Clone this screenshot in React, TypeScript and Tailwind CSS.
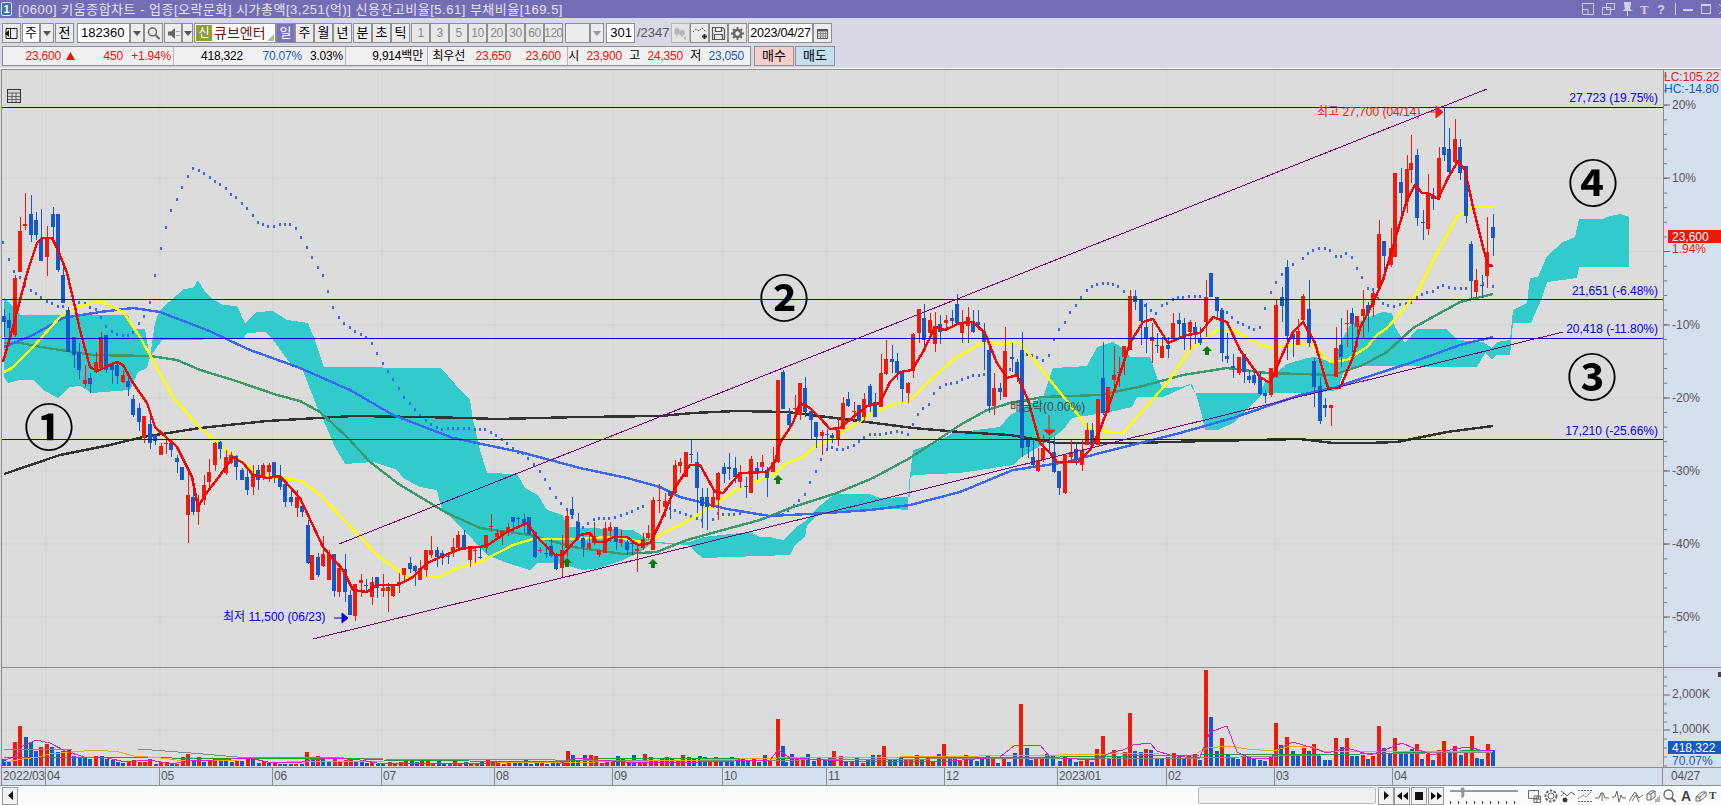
import type { ReactNode } from "react"

type Row = [number, number, number, number, number, number]

// candle rows read off the chart: [x, up?, wickTop, bodyTop, bodyBottom, wickBottom]
const scaled = (ox: number, oy: number, rows: Row[]): Row[] =>
  rows.map(([x, c, a, b, d, e]) => [ox + x / 3, c, oy + a / 3, oy + b / 3, oy + d / 3, oy + e / 3])

const candles: Row[] = [
  ...scaled(0, 180, [
    [12, 0, 388, 408, 425, 470], [28, 0, 400, 420, 445, 470], [44, 1, 285, 295, 465, 470], [61, 1, 110, 152, 275, 275],
    [76, 1, 40, 133, 137, 150], [94, 0, 45, 102, 165, 185], [109, 0, 95, 120, 165, 180], [124, 0, 88, 178, 243, 243],
    [142, 1, 138, 170, 232, 288], [158, 0, 82, 102, 140, 185], [175, 0, 102, 102, 270, 275], [190, 0, 255, 285, 370, 370],
    [205, 0, 380, 390, 515, 515], [222, 0, 472, 472, 525, 565], [238, 0, 490, 517, 570, 598], [256, 1, 555, 600, 612, 620],
    [271, 0, 578, 595, 612, 640], [288, 1, 515, 545, 575, 580], [304, 1, 455, 472, 565, 570], [319, 0, 465, 465, 570, 578],
    [337, 0, 545, 555, 570, 612], [352, 0, 545, 555, 588, 612], [370, 1, 570, 585, 605, 610], [385, 0, 590, 603, 620, 648],
    [400, 0, 645, 657, 705, 710], [417, 0, 670, 684, 725, 752], [433, 1, 708, 708, 775, 790], [451, 0, 700, 732, 790, 806],
    [466, 0, 765, 765, 782, 795], [484, 1, 790, 798, 825, 825], [499, 1, 770, 788, 792, 822], [514, 0, 788, 790, 810, 832],
    [532, 0, 825, 835, 845, 880], [547, 0, 860, 862, 900, 900],
    [646, 1, 785, 790, 855, 872], [661, 0, 783, 785, 808, 838], [678, 1, 810, 832, 880, 885], [693, 1, 815, 825, 850, 852],
    [709, 0, 825, 828, 862, 900], [727, 0, 865, 870, 900, 900],
  ]),
  [188, 1, 470, 495, 515, 543], [193, 0, 490, 497, 512, 515], [198, 1, 495, 505, 512, 525], [204, 1, 475, 485, 500, 505],
  [209, 1, 459, 472, 482, 490], [247, 0, 470, 477, 490, 495], [253, 1, 465, 475, 487, 495], [258, 0, 465, 470, 480, 490],
  [263, 1, 463, 465, 478, 480], [269, 1, 463, 465, 472, 482], [274, 0, 462, 462, 478, 483], [280, 0, 465, 477, 487, 490],
  ...scaled(280, 400, [
    [15, 0, 240, 252, 305, 320], [32, 0, 265, 292, 305, 318], [50, 1, 270, 290, 325, 350], [65, 0, 305, 318, 335, 350],
    [83, 0, 360, 375, 490, 492], [97, 1, 465, 465, 540, 540], [115, 0, 460, 470, 525, 530], [130, 1, 408, 462, 498, 500],
    [146, 1, 450, 462, 540, 540], [163, 0, 462, 462, 572, 590], [178, 1, 490, 505, 575, 590], [196, 0, 462, 507, 575, 605],
    [211, 0, 570, 585, 645, 645], [226, 1, 552, 552, 648, 662], [244, 1, 522, 540, 550, 590], [259, 0, 538, 554, 556, 578],
    [277, 1, 530, 545, 590, 615], [292, 0, 530, 532, 565, 593], [310, 1, 522, 565, 572, 590], [325, 1, 550, 560, 572, 635],
    [340, 1, 552, 552, 587, 590], [358, 1, 518, 545, 555, 580], [373, 1, 505, 505, 525, 545], [391, 0, 472, 490, 507, 520],
    [406, 0, 495, 497, 512, 557], [421, 1, 480, 505, 540, 540], [439, 1, 450, 450, 510, 530], [454, 1, 408, 450, 465, 475],
    [472, 0, 440, 450, 470, 500], [487, 0, 450, 458, 475, 495], [505, 0, 462, 469, 471, 492], [520, 1, 415, 442, 455, 470],
    [535, 1, 392, 405, 445, 450], [553, 0, 390, 405, 450, 450], [569, 1, 445, 447, 480, 500], [585, 1, 440, 449, 452, 488],
    [601, 0, 440, 471, 473, 478], [617, 1, 405, 405, 445, 460], [633, 1, 342, 377, 379, 395], [650, 1, 390, 398, 410, 420],
    [667, 1, 390, 392, 405, 435], [683, 1, 370, 380, 395, 408], [700, 0, 350, 350, 365, 395], [715, 0, 352, 354, 356, 375],
    [732, 0, 342, 358, 372, 400], [748, 0, 352, 352, 402, 405], [764, 0, 395, 395, 470, 475], [781, 1, 440, 449, 451, 458],
    [797, 0, 430, 459, 461, 475], [812, 0, 418, 438, 467, 470], [829, 0, 460, 465, 507, 510], [845, 1, 405, 450, 505, 535],
    [862, 1, 330, 348, 445, 470], [877, 0, 292, 327, 345, 355], [893, 0, 340, 365, 415, 420], [910, 0, 410, 415, 442, 472],
    [926, 1, 400, 428, 445, 450], [943, 1, 365, 408, 430, 435], [958, 1, 450, 450, 465, 472], [976, 1, 365, 385, 458, 460],
    [991, 1, 365, 380, 392, 425], [1007, 0, 380, 380, 425, 450], [1024, 1, 390, 418, 430, 440], [1040, 0, 420, 425, 450, 465],
    [1057, 0, 420, 429, 431, 465], [1072, 1, 430, 447, 452, 515], [1088, 1, 400, 418, 445, 450], [1105, 1, 375, 400, 415, 420],
    [1120, 1, 292, 300, 450, 450], [1138, 1, 253, 299, 301, 340],
  ]),
  ...scaled(660, 280, [
    [14, 1, 640, 663, 680, 710], [30, 0, 632, 632, 648, 718], [46, 1, 540, 555, 640, 640], [61, 1, 535, 547, 558, 580],
    [78, 1, 515, 515, 590, 590], [93, 0, 478, 522, 524, 550], [111, 0, 515, 546, 625, 700], [127, 0, 625, 652, 677, 745],
    [142, 0, 625, 650, 680, 750], [158, 1, 625, 650, 682, 685], [175, 1, 575, 580, 660, 720], [192, 0, 550, 562, 582, 610],
    [208, 0, 520, 562, 566, 600], [226, 0, 530, 565, 590, 610], [241, 1, 555, 575, 605, 625], [257, 0, 590, 619, 621, 655],
    [274, 1, 528, 538, 638, 640], [290, 0, 545, 565, 575, 600], [306, 1, 525, 547, 560, 578], [322, 0, 560, 570, 595, 650],
    [338, 1, 500, 545, 575, 575], [355, 1, 300, 300, 545, 550], [370, 0, 270, 275, 388, 388], [388, 0, 385, 402, 435, 450],
    [404, 1, 345, 384, 386, 395], [421, 1, 310, 310, 405, 420], [436, 0, 292, 325, 395, 410], [452, 0, 385, 392, 420, 478],
    [469, 0, 425, 425, 470, 505], [485, 1, 450, 455, 467, 525], [501, 0, 448, 461, 463, 510], [517, 0, 460, 465, 475, 490],
    [533, 1, 410, 450, 480, 498], [550, 1, 350, 370, 448, 450], [565, 0, 335, 358, 378, 380], [582, 1, 365, 394, 396, 422],
    [598, 0, 375, 375, 422, 425], [613, 1, 340, 357, 410, 430], [631, 0, 312, 317, 378, 395], [646, 0, 340, 367, 410, 410],
    [664, 1, 222, 280, 380, 380], [679, 1, 180, 237, 282, 285], [695, 0, 195, 238, 245, 280], [712, 0, 218, 242, 280, 300],
    [727, 0, 270, 275, 328, 365], [744, 1, 305, 308, 340, 370], [760, 1, 160, 162, 272, 295], [778, 1, 88, 88, 160, 190],
    [793, 0, 72, 113, 180, 200], [810, 1, 100, 120, 160, 165], [826, 1, 95, 138, 192, 215], [841, 0, 105, 132, 155, 192],
    [859, 1, 105, 120, 128, 150], [875, 0, 90, 115, 122, 135], [892, 0, 42, 72, 130, 130], [907, 1, 90, 125, 158, 190],
    [923, 1, 82, 110, 138, 190], [940, 0, 90, 122, 155, 160], [955, 0, 90, 125, 135, 150], [971, 0, 130, 152, 185, 270],
    [988, 0, 205, 210, 378, 400], [1003, 1, 280, 325, 378, 405], [1020, 0, 310, 325, 335, 360],
  ]),
  ...scaled(1000, 280, [
    [16, 1, 140, 212, 350, 350], [35, 0, 190, 230, 238, 275], [50, 0, 238, 245, 285, 305], [67, 0, 155, 210, 505, 530],
    [83, 0, 470, 478, 500, 535], [98, 0, 480, 530, 555, 560], [115, 1, 505, 540, 572, 575], [130, 1, 465, 505, 540, 545],
    [147, 0, 470, 483, 486, 515], [163, 0, 470, 517, 575, 580], [178, 0, 573, 573, 625, 645], [196, 1, 525, 525, 640, 643],
    [212, 1, 480, 515, 530, 545], [229, 0, 490, 507, 540, 555], [245, 1, 480, 510, 555, 572], [262, 1, 430, 450, 495, 495],
    [277, 0, 430, 450, 495, 495], [293, 1, 358, 358, 495, 495], [310, 0, 185, 293, 400, 405], [325, 1, 320, 320, 395, 400],
    [342, 1, 197, 285, 300, 327], [358, 1, 230, 277, 279, 320], [373, 1, 197, 197, 230, 285], [390, 1, 30, 47, 210, 210],
    [406, 0, 30, 48, 65, 90], [423, 0, 57, 57, 122, 195], [439, 0, 70, 140, 178, 218], [455, 1, 130, 172, 182, 248],
    [472, 0, 160, 194, 196, 220], [487, 1, 170, 197, 233, 233], [504, 0, 170, 195, 208, 235], [520, 1, 100, 128, 175, 178],
    [537, 0, 100, 120, 133, 170], [553, 0, 115, 130, 178, 210], [569, 1, 120, 125, 155, 210], [585, 0, 125, 142, 158, 192],
    [601, 0, 140, 175, 190, 195], [619, 1, 0, 50, 125, 170], [634, 0, -20, -20, 50, 50], [650, 0, 50, 50, 93, 110],
    [667, 0, 90, 90, 220, 245], [682, 0, 160, 228, 237, 250], [700, 0, 222, 258, 265, 295], [716, 1, 232, 232, 280, 285],
    [733, 0, 222, 222, 275, 310], [748, 0, 270, 287, 300, 310], [763, 0, 270, 285, 310, 315], [781, 0, 272, 290, 343, 345],
    [796, 0, 330, 338, 348, 368], [814, 1, 265, 265, 345, 350], [829, 1, 60, 75, 290, 295], [845, 0, 20, 50, 78, 125],
    [861, 0, -60, -40, 168, 240], [878, 0, 150, 162, 178, 232], [895, 1, 118, 152, 195, 195], [910, 1, 42, 48, 120, 125],
    [928, 0, 0, 88, 190, 200], [943, 0, 235, 243, 322, 380], [959, 0, 290, 318, 422, 432], [976, 0, 355, 375, 383, 412],
    [992, 1, 375, 375, 385, 438], [1008, 1, 140, 205, 290, 292], [1023, 0, 115, 195, 232, 260], [1040, 1, 90, 129, 131, 200],
    [1057, 0, 85, 100, 132, 215], [1072, 1, 108, 108, 142, 200], [1089, 1, 30, 88, 108, 175], [1104, 0, 65, 75, 100, 155],
    [1120, 1, 30, 40, 75, 110],
  ]),
  ...scaled(1340, 110, [
    [118, 1, 330, 372, 535, 540], [133, 0, 392, 392, 437, 510], [152, 1, 355, 415, 465, 470], [166, 1, 190, 190, 440, 440],
    [184, 0, 175, 215, 248, 330], [200, 1, 135, 178, 275, 310], [214, 1, 75, 160, 180, 218], [232, 0, 118, 135, 325, 348],
    [248, 0, 300, 337, 339, 390], [265, 1, 192, 250, 356, 375], [280, 0, 235, 255, 268, 300], [296, 1, 110, 145, 265, 270],
    [313, 0, -9, 112, 135, 152], [328, 0, 55, 118, 185, 205], [346, 1, 27, 88, 155, 170], [361, 0, 88, 112, 190, 210],
    [379, 0, 168, 168, 318, 338], [394, 0, 393, 403, 512, 565], [409, 1, 478, 510, 545, 562], [426, 0, 495, 524, 526, 565],
    [442, 1, 322, 425, 498, 535], [460, 0, 312, 352, 383, 437],
  ]),
]

// volume: [x, up?, height]
const volumeRows: [number, number, number][] = [
  [4, 0, 7], [9, 0, 4], [15, 1, 24], [20, 1, 40], [26, 0, 29], [31, 0, 24], [36, 0, 15], [41, 1, 19], [47, 1, 22], [52, 0, 19], [58, 0, 14],
  [63, 1, 15], [69, 1, 16], [74, 0, 10], [80, 0, 9], [85, 0, 9], [90, 0, 7], [96, 1, 10], [102, 0, 10], [107, 0, 7], [113, 0, 6],
  [118, 0, 4], [123, 0, 3], [129, 1, 5], [134, 1, 6], [140, 1, 4], [145, 1, 4], [150, 1, 7], [156, 0, 2], [161, 1, 4], [167, 1, 4],
  [172, 0, 3], [177, 1, 2], [183, 1, 9], [188, 1, 12], [194, 0, 5], [199, 1, 9], [204, 0, 4], [210, 1, 6], [215, 1, 8], [221, 0, 5],
  [226, 0, 5], [232, 0, 4], [237, 1, 5], [242, 0, 5], [248, 1, 9], [253, 0, 8], [259, 0, 3], [264, 1, 5], [269, 0, 3], [275, 1, 3],
  [280, 0, 2], [285, 0, 2], [291, 0, 2], [296, 1, 2], [302, 0, 2], [307, 1, 14], [313, 0, 8], [318, 1, 10], [323, 0, 8], [329, 0, 5],
  [335, 1, 8], [340, 1, 5], [346, 1, 6], [351, 1, 7], [356, 0, 5], [362, 0, 5], [367, 0, 3], [372, 1, 4], [378, 0, 2], [383, 0, 2],
  [568, 1, 15], [573, 0, 11], [578, 0, 6], [778, 1, 47], [783, 0, 20], [834, 1, 15], [884, 1, 20], [944, 1, 22], [1021, 1, 62], [1027, 0, 18],
  [1060, 0, 5], [1065, 1, 10], [1070, 0, 7], [1076, 0, 4], [1081, 1, 5], [1087, 1, 7], [1092, 0, 4], [1097, 1, 17], [1103, 1, 30], [1109, 0, 7],
  [1114, 1, 16], [1119, 0, 10], [1125, 1, 14], [1130, 1, 53], [1135, 0, 15], [1141, 0, 14], [1146, 1, 17], [1151, 0, 16], [1157, 0, 8],
  [1162, 0, 7], [1168, 1, 9], [1174, 1, 13], [1179, 0, 9], [1184, 0, 7], [1189, 1, 11], [1195, 1, 12], [1200, 0, 6], [1206, 1, 96], [1211, 0, 49],
  [1217, 0, 15], [1222, 1, 28], [1228, 0, 12], [1233, 0, 8], [1238, 0, 7], [1244, 1, 10], [1249, 0, 9], [1254, 0, 7], [1260, 0, 6], [1265, 0, 5],
  [1271, 1, 10], [1276, 1, 43], [1281, 0, 21], [1287, 1, 29], [1293, 0, 15], [1298, 0, 11], [1304, 1, 18], [1309, 0, 15], [1314, 1, 22],
  [1319, 0, 10], [1325, 0, 6], [1330, 0, 6], [1336, 1, 28], [1342, 0, 19], [1347, 1, 28], [1352, 0, 10], [1357, 0, 10], [1363, 1, 11],
  [1368, 0, 7], [1373, 1, 10], [1379, 1, 40], [1384, 0, 18], [1390, 0, 12], [1395, 1, 28], [1401, 0, 15], [1406, 0, 15], [1412, 0, 17],
  [1417, 1, 22], [1422, 0, 7], [1428, 1, 12], [1433, 0, 6], [1439, 1, 16], [1444, 1, 25], [1450, 0, 15], [1455, 1, 20], [1461, 0, 11],
  [1466, 1, 16], [1472, 1, 30], [1477, 0, 8], [1482, 0, 7], [1488, 1, 22], [1493, 0, 16],
]

const volumes = (() => {
  let seed = 7
  const next = () => {
    seed = (seed * 1103515245 + 12345) % 2147483648
    return seed / 2147483648
  }
  const out: [number, number, number][] = []
  for (let i = 0; i < 275; i++) {
    const x = 4 + i * 5.434
    const known = volumeRows.find((v) => Math.abs(v[0] - x) < 2.7)
    if (known) {
      out.push(known)
      continue
    }
    const near = candles.reduce((a, c) => (Math.abs(c[0] - x) < Math.abs(a[0] - x) ? c : a), candles[0])
    out.push([x, near[1], x < 578 ? 2 + next() * 4 : 3 + next() * 10])
  }
  return out
})()

const redLine =
  "3,362 13,327 20,300 28,270 37,243 42,238 52,238 58,250 67,273 75,307 80,330 90,367 97,371 110,365 117,362 123,365 133,383 147,403 155,427 167,438 177,447 192,477 198,507 205,495 218,478 233,457 243,463 253,475 267,478 280,476 300,498 323,547 343,570 353,590 367,592 377,585 398,585 413,577 427,563 450,553 463,548 480,547 488,545 507,532 527,523 537,537 555,555 563,555 580,535 590,533 597,542 605,542 613,537 627,537 638,545 650,543 660,523 675,488 690,465 700,465 715,492 723,493 740,473 767,472 775,462 780,443 793,423 800,403 810,408 820,418 830,429 840,428 853,417 867,406 880,403 890,382 900,372 912,370 923,352 935,327 945,330 960,323 973,322 985,333 997,363 1007,378 1017,375 1028,400 1040,443 1050,453 1057,462 1078,462 1090,450 1100,430 1117,383 1130,343 1143,322 1153,319 1168,343 1187,335 1200,333 1213,317 1227,322 1240,350 1260,377 1270,383 1283,353 1293,332 1303,322 1315,343 1328,388 1340,388 1353,357 1360,328 1373,303 1383,280 1397,233 1407,200 1415,185 1422,193 1428,193 1438,199 1448,178 1458,161 1465,170 1473,207 1483,247 1488,265 1493,266"
const yellowLine =
  "4,372 12,368 33,347 60,317 77,307 100,301 123,312 140,337 173,397 200,428 230,453 257,473 280,479 300,480 320,495 347,523 377,555 407,577 440,577 457,568 480,562 513,545 533,539 573,539 613,537 647,543 663,533 680,525 703,512 740,488 773,475 787,463 803,457 813,448 833,438 873,413 897,403 908,402 927,383 953,360 983,342 1000,344 1020,343 1050,380 1090,430 1123,433 1167,383 1190,350 1217,330 1233,330 1260,345 1273,348 1293,345 1310,343 1330,362 1347,360 1367,347 1377,335 1387,328 1397,317 1417,293 1437,253 1457,217 1473,207 1493,207"
const greenLine =
  "4,343 20,343 47,348 93,355 150,356 177,360 200,370 233,380 277,395 300,401 320,412 347,437 370,462 400,485 447,513 480,528 530,535 573,547 623,554 657,552 687,540 723,530 760,520 793,507 837,493 873,478 910,458 933,443 960,425 987,410 1010,403 1043,397 1100,395 1143,386 1183,375 1227,368 1267,373 1333,375 1363,365 1387,352 1413,328 1460,302 1493,294"
const blueLine =
  "4,347 33,335 63,318 100,312 133,308 160,312 207,330 250,350 300,368 350,390 393,415 453,438 520,452 580,468 627,478 660,487 680,497 727,509 770,516 827,513 870,510 910,505 960,492 1013,470 1067,462 1100,453 1140,443 1180,433 1233,418 1300,395 1333,388 1410,363 1460,345 1493,337"
const blackLine =
  "4,474 60,455 110,445 143,437 200,428 267,421 353,416 420,417 467,418 497,419 580,417 660,416 693,413 737,411 787,412 827,417 867,422 913,428 960,432 1010,435 1057,443 1133,443 1207,441 1300,439 1333,443 1367,443 1397,442 1447,432 1493,426"

const cloud =
  "4,298 12,305 20,315 128,315 133,329 145,329 148,347 150,357 155,323 160,310 177,295 183,289 193,288 198,280 205,292 213,299 223,305 237,306 245,323 257,312 273,311 287,320 308,323 315,340 324,367 441,368 455,384 470,400 473,420 480,450 487,473 517,474 525,488 538,495 547,510 563,515 567,527 633,530 653,542 677,543 690,542 703,537 750,532 760,537 770,537 783,540 795,528 807,520 818,507 835,494 870,494 880,498 910,497 910,477 913,450 937,442 953,433 1000,427 1010,415 1043,397 1053,368 1087,366 1097,347 1113,342 1123,348 1130,357 1150,357 1158,380 1163,388 1182,387 1190,384 1195,393 1260,393 1265,382 1287,364 1307,358 1315,357 1333,363 1342,340 1350,325 1382,312 1392,313 1395,327 1405,343 1417,329 1447,329 1457,340 1483,342 1492,348 1497,342 1510,340 1513,310 1527,303 1530,278 1538,277 1547,256 1563,242 1575,237 1579,219 1603,219 1610,216 1620,214 1629,217 1629,267 1579,267 1577,278 1547,282 1542,298 1531,323 1513,323 1510,355 1497,355 1492,359 1485,353 1477,367 1363,366 1343,373 1338,390 1315,393 1263,393 1248,408 1233,423 1218,430 1205,430 1203,420 1197,397 1192,384 1183,388 1163,397 1137,397 1132,407 1110,412 1072,418 1063,430 1050,440 1022,457 1013,465 960,473 913,475 909,480 908,510 880,508 820,513 807,525 805,537 795,545 790,555 703,558 695,552 690,545 653,543 640,552 623,560 600,568 583,570 557,563 537,563 530,570 507,563 487,555 473,540 443,510 440,503 437,490 420,487 403,478 397,470 373,462 345,464 335,447 322,417 317,407 302,368 293,367 273,340 265,332 247,333 243,339 162,340 155,350 150,357 147,368 138,372 130,390 103,392 92,393 80,386 70,387 58,398 43,390 33,380 20,380 8,383 4,377"

const dots =
  "3,242 9,259 14,271 20,277 25,285 31,290 36,293 41,297 47,301 52,303 58,306 63,306 79,302 85,303 90,307 96,309 101,317 106,326 112,331 117,334 123,335 128,335 133,332 139,323 144,316 150,302 155,275 161,248 166,227 171,210 177,199 182,187 188,176 193,168 199,170 204,173 210,177 215,181 220,184 226,188 231,194 236,197 242,203 247,208 253,215 258,222 263,224 268,226 274,226 280,224 285,224 290,224 296,228 301,237 307,247 312,257 318,267 323,275 328,291 333,307 339,317 344,323 350,327 355,331 361,334 366,337 372,343 377,353 383,363 388,371 393,379 399,388 404,397 410,403 415,409 420,415 426,420 431,424 437,427 442,429 448,428 453,428 458,428 464,428 469,428 475,429 480,429 485,429 491,432 496,435 502,439 507,443 513,448 518,452 523,453 528,458 534,464 540,471 545,479 550,488 556,497 561,503 567,509 572,517 577,522 583,527 588,523 594,519 599,518 604,518 609,518 615,517 621,515 627,513 632,511 638,508 643,506 670,508 675,510 680,512 686,514 691,516 697,518 702,520 713,519 718,513 723,514 729,514 734,514 740,513 783,514 788,510 794,505 799,500 805,494 810,482 816,471 821,459 827,449 832,447 837,449 843,449 848,447 854,445 859,441 864,437 870,434 875,434 880,434 886,433 891,432 897,431 902,432 908,434 913,424 918,414 923,408 929,404 934,393 940,387 946,384 951,383 957,382 962,379 968,377 973,375 979,375 984,374 1010,369 1016,368 1027,354 1032,355 1037,357 1043,360 1049,355 1054,339 1059,329 1065,322 1070,312 1076,305 1081,297 1087,290 1092,286 1097,284 1103,283 1108,283 1113,284 1118,286 1124,291 1135,297 1145,305 1151,310 1156,313 1162,305 1167,303 1173,299 1178,297 1183,297 1189,296 1195,296 1200,296 1222,309 1227,312 1232,317 1238,322 1243,324 1249,327 1254,329 1260,327 1265,308 1271,292 1276,282 1282,274 1287,268 1293,264 1303,258 1308,253 1313,250 1319,248 1325,248 1330,250 1336,256 1341,256 1346,253 1352,257 1357,268 1362,277 1368,288 1373,289 1378,298 1383,303 1388,305 1394,306 1400,304 1406,303 1411,302 1417,297 1422,294 1427,292 1433,291 1438,287 1443,285 1449,287 1455,288 1461,288 1466,288 1483,283 1493,286"
    .split(" ")
    .map((p) => p.split(",").map(Number))

const volMagenta =
  "4,760 15,757 23,746 36,740 50,743 65,751 84,757 107,758 126,762 149,760 172,764 191,760 214,760 249,758 268,762 298,763 310,760 333,758 360,760 383,764 421,763 497,764 559,764 568,760 578,758 597,760 640,763 700,762 770,760 778,750 790,758 860,762 950,761 1000,757 1015,745 1040,745 1050,757 1060,758 1093,760 1113,752 1123,750 1133,745 1150,743 1157,751 1170,755 1193,758 1200,757 1210,732 1227,726 1237,752 1250,758 1270,759 1280,748 1293,742 1313,748 1327,753 1347,748 1370,755 1387,749 1402,743 1413,748 1433,755 1453,749 1470,747 1483,751 1493,750"
const volOrange =
  "4,762 38,757 50,754 73,752 96,750 119,752 134,756 161,758 176,760 237,761 287,761 325,761 383,762 497,762 547,763 597,762 700,760 778,758 900,757 1060,755 1110,754 1160,753 1197,753 1207,748 1230,746 1247,749 1273,751 1287,747 1310,746 1323,751 1360,751 1493,751"
const volGreen = "4,757 172,758 344,758 383,760 555,762 597,759 800,758 1000,757 1060,757 1200,755 1360,754 1493,750"
const volGray = "4,750 73,749 138,749 165,751 191,753 237,757 344,758 383,759 555,760 800,760 1060,758 1200,758 1360,754 1493,752"

const monthX = [46, 160, 273, 382, 495, 613, 723, 827, 945, 1058, 1167, 1275, 1393]
const percentY = [105, 178, 251.5, 325, 398, 471, 544, 617]

const lineClass = "fill-none [stroke-linejoin:round]"

function PriceChart() {
  return (
    <svg width={1661} height={597} viewBox="2 70 1661 597" className="block shrink-0">
      {percentY.map((y) => (
        <line key={y} x1={2} x2={1663} y1={y} y2={y} stroke="#d3d3d3" />
      ))}
      {monthX.map((x) => (
        <line key={x} x1={x} x2={x} y1={70} y2={667} stroke="#d3d3d3" />
      ))}
      <polygon points={cloud} fill="#32cbcc" shapeRendering="crispEdges" />
      <g shapeRendering="crispEdges">
        {dots.map(([x, y]) => (
          <rect key={`${x}-${y}`} x={x - 1} y={y - 1} width={2} height={3} fill="#3b67f5" />
        ))}
      </g>
      <g shapeRendering="crispEdges" strokeWidth={2.4}>
        <polyline points={blackLine} className={lineClass} stroke="#333333" />
        <polyline points={greenLine} className={lineClass} stroke="#3a9a6e" />
        <polyline points={blueLine} className={lineClass} stroke="#3b67f5" />
        <polyline points={yellowLine} className={lineClass} stroke="#ffff00" />
      </g>
      <g shapeRendering="crispEdges">
        {candles.map(([x, up, wt, bt, bb, wb]) => {
          const cx = Math.round(x)
          const color = up ? "#ee1a0a" : "#1558c8"
          return (
            <g key={`${x}-${wt}`} fill={color}>
              <rect x={cx} y={wt} width={1} height={wb - wt} />
              <rect x={cx - 2} y={bt} width={4} height={Math.max(bb - bt, 1)} />
            </g>
          )
        })}
      </g>
      <polyline points={redLine} className={lineClass} stroke="#ff0000" strokeWidth={2.4} shapeRendering="crispEdges" />

      {[107, 299, 338, 439].map((y) => (
        <line key={y} x1={2} x2={1663} y1={y + 0.5} y2={y + 0.5} stroke="#0000d0" />
      ))}
      <g stroke="#800080" shapeRendering="crispEdges">
        <line x1={339} y1={544} x2={1487} y2={89} />
        <line x1={313} y1={639} x2={1563} y2={332} />
      </g>

      <g className="text-[12px] fill-[#0000e0]" textAnchor="end">
        <text x={1658} y={102}>27,723 (19.75%)</text>
        <text x={1658} y={295}>21,651 (-6.48%)</text>
        <text x={1658} y={333}>20,418 (-11.80%)</text>
        <text x={1658} y={435}>17,210 (-25.66%)</text>
      </g>
      <text x={1317} y={116} className="text-[12px] fill-[#ee1a0a]">최고 27,700 (04/14)</text>
      <path d="M1428 112h8M1436 106l7 6-7 6z" stroke="#ee1a0a" fill="#ee1a0a" />
      <text x={223} y={621} className="text-[12px] fill-[#0000e0]">최저 11,500 (06/23)</text>
      <path d="M334 618h8M342 613l6 5-6 5z" stroke="#0000e0" fill="#0000e0" />
      <text x={1010} y={411} className="text-[12px] fill-[#444444]">배당락(0.00%)</text>
      <path d="M1049 415v14M1044 430h11l-5.500 5z" stroke="#ee1a0a" fill="#ee1a0a" />
      {[[567, 558], [653, 559], [778, 475], [1207, 346]].map(([x, y]) => (
        <path key={x} d={`M${x} ${y}l5 5h-3v4h-4v-4h-3z`} fill="#0a7a0a" />
      ))}
      <g className="text-[50px] font-bold fill-black" textAnchor="middle">
        <text x={49} y={446}>①</text>
        <text x={784} y={317}>②</text>
        <text x={1592} y={396}>③</text>
        <text x={1593} y={202}>④</text>
      </g>
      <rect x={7.5} y={89.5} width={13} height={13} fill="#d8d8d8" stroke="#333333" />
      <path d="M8 93h12M8 96.500h12M8 99.500h12M12 93v9M16 93v9" stroke="#666666" fill="none" />
    </svg>
  )
}

function PriceAxis() {
  const minor: number[] = []
  for (let y = 76; y < 660; y += 14.63) minor.push(y)
  return (
    <div className="w-[57px] shrink-0 border-l border-[#8c8c8c] bg-[#d5e0ee] box-content">
      <svg width={57} height={597} viewBox="1664 70 57 597" className="block">
        {minor.map((y) => (
          <line key={y} x1={1664} x2={1667} y1={y} y2={y} stroke="#777777" />
        ))}
        {percentY.map((y) => (
          <line key={y} x1={1664} x2={1670} y1={y} y2={y} stroke="#666666" />
        ))}
        <g className="text-[12px] fill-[#555555]">
          <text x={1672} y={109}>20%</text>
          <text x={1672} y={182}>10%</text>
          <text x={1672} y={329}>-10%</text>
          <text x={1672} y={402}>-20%</text>
          <text x={1672} y={475}>-30%</text>
          <text x={1672} y={548}>-40%</text>
          <text x={1672} y={621}>-50%</text>
        </g>
        <text x={1664} y={81} className="text-[12px] fill-[#ee1a0a]">LC:105.22</text>
        <text x={1664} y={93} className="text-[12px] fill-[#1558c8]">HC:-14.80</text>
        <rect x={1668} y={230} width={53} height={13} fill="#e8190a" />
        <text x={1672} y={241} className="text-[12px] fill-white">23,600</text>
        <text x={1672} y={253} className="text-[12px] fill-[#ee1a0a]">1.94%</text>
      </svg>
    </div>
  )
}

function VolumeChart() {
  return (
    <svg width={1661} height={99} viewBox="2 668 1661 99" className="block shrink-0">
      {[695, 730].map((y) => (
        <line key={y} x1={2} x2={1663} y1={y} y2={y} stroke="#d3d3d3" />
      ))}
      {monthX.map((x) => (
        <line key={x} x1={x} x2={x} y1={668} y2={767} stroke="#d3d3d3" />
      ))}
      <g shapeRendering="crispEdges">
        {volumes.map(([x, up, h]) => (
          <rect key={x} x={Math.round(x) - 2} y={766 - h} width={4} height={h} fill={up ? "#ee1a0a" : "#1558c8"} />
        ))}
        <polyline points={volGray} className={lineClass} stroke="#888888" strokeWidth={1} />
        <polyline points={volGreen} className={lineClass} stroke="#1f9a3c" strokeWidth={1} />
        <polyline points={volOrange} className={lineClass} stroke="#f5a800" strokeWidth={1} />
        <polyline points={volMagenta} className={lineClass} stroke="#e020c0" strokeWidth={1} />
      </g>
    </svg>
  )
}

function VolumeAxis() {
  return (
    <div className="w-[57px] shrink-0 border-l border-[#8c8c8c] bg-[#d5e0ee] box-content">
      <svg width={57} height={99} viewBox="1664 668 57 99" className="block">
        {[677, 686, 704, 713, 722, 739, 748, 757, 766].map((y) => (
          <line key={y} x1={1664} x2={1667} y1={y} y2={y} stroke="#777777" />
        ))}
        {[695, 730].map((y) => (
          <line key={y} x1={1664} x2={1670} y1={y} y2={y} stroke="#666666" />
        ))}
        <rect x={1718} y={672} width={3} height={5} fill="#444444" />
        <g className="text-[12px] fill-[#555555]">
          <text x={1672} y={698}>2,000K</text>
          <text x={1672} y={733}>1,000K</text>
        </g>
        <rect x={1668} y={741} width={53} height={13} fill="#1558c8" />
        <text x={1672} y={752} className="text-[12px] fill-white">418,322</text>
        <text x={1672} y={765} className="text-[12px] fill-[#1558c8]">70.07%</text>
      </svg>
    </div>
  )
}

const dateCells: [string, number][] = [
  ["2022/03", 44], ["04", 114], ["05", 113], ["06", 109], ["07", 113], ["08", 118], ["09", 110], ["10", 104],
  ["11", 118], ["12", 113], ["2023/01", 109], ["02", 108], ["03", 118], ["04", 270],
]

function Btn({
  w,
  className = "",
  children,
}: {
  w: string
  className?: string
  children?: ReactNode
}) {
  return (
    <div
      className={`${w} h-[20px] shrink-0 flex items-center justify-center border border-[#8f8f8f] text-[13px] ${className}`}
    >
      {children}
    </div>
  )
}

function Caret({ color = "#555555" }: { color?: string }) {
  return (
    <svg width={8} height={5} viewBox="0 0 8 5">
      <path d="M0 0h8L4 5z" fill={color} />
    </svg>
  )
}

function Glyph({ children, w = 15 }: { children: ReactNode; w?: number }) {
  return (
    <svg width={w} height={15} viewBox={`0 0 ${w} 15`} fill="none" stroke="#555555">
      {children}
    </svg>
  )
}

function TopToolbar() {
  const gray = "bg-[#ececec]"
  return (
    <div className="flex h-[28px] items-start pt-[5px] pl-[2px] text-black">
      <Btn w="w-[19px]" className={gray}>
        <Glyph>
          <path d="M2 2.500h11v10H2zM6.500 2.500v10" stroke="#222222" />
          <path d="M1 7.500l4-3.500v7z" fill="#111111" stroke="none" />
        </Glyph>
      </Btn>
      <Btn w="w-[18px] ml-px" className="bg-white">주</Btn>
      <Btn w="w-[14px]" className={gray}><Caret /></Btn>
      <Btn w="w-[19px] ml-px" className={gray}>전</Btn>
      <Btn w="w-[53px] ml-[3px] !justify-start pl-[3px]" className="bg-white">182360</Btn>
      <Btn w="w-[14px]" className={gray}><Caret /></Btn>
      <Btn w="w-[19px]" className={gray}>
        <Glyph>
          <circle cx="6.500" cy="6" r="4" strokeWidth="1.500" stroke="#666666" />
          <path d="M9.500 9l4 4" strokeWidth="2" stroke="#666666" />
        </Glyph>
      </Btn>
      <Btn w="w-[18px] ml-px" className={gray}>
        <Glyph>
          <path d="M2 5.500h3l4-3.500v11l-4-3.500H2z" fill="#666666" stroke="none" />
          <path d="M11 5v1M11 9v1M13 5v1M13 9v1" stroke="#666666" />
        </Glyph>
      </Btn>
      <Btn w="w-[11px]" className={gray}><Caret /></Btn>
      <div className="relative ml-px flex h-[20px] w-[82px] shrink-0 items-center border border-[#8f8f8f] bg-white pl-px">
        <span className="flex h-[16px] w-[16px] items-center justify-center bg-[#8fa038] text-[12px] text-white">신</span>
        <span className="ml-[2px] text-[14px] leading-none text-[#7a1010]">큐브엔터</span>
        <svg width={7} height={7} viewBox="0 0 7 7" className="absolute bottom-px right-px">
          <path d="M7 0v7H0z" fill="#b5b5b5" />
        </svg>
      </div>
      <Btn w="w-[19px]" className="bg-[#7a74b8] text-white">일</Btn>
      <Btn w="w-[19px]" className={gray}>주</Btn>
      <Btn w="w-[19px]" className={gray}>월</Btn>
      <Btn w="w-[19px]" className={gray}>년</Btn>
      <Btn w="w-[19px] ml-px" className={gray}>분</Btn>
      <Btn w="w-[19px]" className={gray}>초</Btn>
      <Btn w="w-[19px]" className={gray}>틱</Btn>
      <div className="ml-px flex shrink-0">
        {["1", "3", "5", "10", "20", "30", "60", "120"].map((n) => (
          <Btn key={n} w="w-[19px]" className="bg-[#e8e8e8] !text-[12px] tracking-[-0.5px] text-[#888888]">{n}</Btn>
        ))}
      </div>
      <Btn w="w-[25px] ml-[2px]" className="bg-[#ececec]" />
      <Btn w="w-[14px]" className="bg-[#ececec]"><Caret color="#999999" /></Btn>
      <Btn w="w-[29px] ml-[2px] !justify-end pr-[2px]" className="bg-white">301</Btn>
      <span className="ml-[2px] w-[33px] shrink-0 text-[13px] leading-[20px] text-[#555555]">/2347</span>
      <Btn w="w-[19px] ml-px !border-[#b5b5b5]" className="bg-[#e4e4e4]">
        <Glyph>
          <path d="M4 1v10M4 3h2v5H2V3zM9 3v8M7 5h4v4H7z" stroke="#b5b5b5" fill="#b5b5b5" />
          <path d="M10 12l3-2v4z" fill="#b5b5b5" stroke="none" />
        </Glyph>
      </Btn>
      <Btn w="w-[19px]" className={gray}>
        <Glyph>
          <path d="M1 6l3-3 3 2 3-3 4 4" stroke="#666666" strokeDasharray="2 1" />
          <path d="M10 10.500h5M12.500 8v5" stroke="#333333" strokeWidth="2" />
        </Glyph>
      </Btn>
      <Btn w="w-[19px]" className={gray}>
        <Glyph>
          <path d="M1.500 1.500h10l2 2v10h-12zM4.500 1.500v4h6v-4M3.500 8.500h8v5h-8z" strokeWidth="1.200" />
        </Glyph>
      </Btn>
      <Btn w="w-[19px]" className={gray}>
        <Glyph>
          <circle cx="7.500" cy="7.500" r="3.500" strokeWidth="2.500" stroke="#666666" />
          <path d="M7.500 1v2M7.500 12v2M1 7.500h2M12 7.500h2M3 3l1.500 1.500M10.500 10.500L12 12M12 3l-1.500 1.500M4.500 10.500L3 12" strokeWidth="1.800" stroke="#666666" />
        </Glyph>
      </Btn>
      <Btn w="w-[65px] ml-px" className="bg-white !text-[12.500px] tracking-[-0.2px]">2023/04/27</Btn>
      <Btn w="w-[19px]" className={gray}>
        <Glyph>
          <path d="M2.500 3.500h10v9h-10z" stroke="#555555" />
          <path d="M2 4.500h11" stroke="#555555" strokeWidth="2" />
          <path d="M2.500 7.500h10M2.500 10h10M5.500 6v6M8 6v6M10.500 6v6" stroke="#888888" />
        </Glyph>
      </Btn>
    </div>
  )
}

function Val({ w, color = "text-black", ml, children }: { w: string; color?: string; ml?: string; children: ReactNode }) {
  return <span className={`${w} ${color} ${ml ?? ""} shrink-0 text-right`}>{children}</span>
}

function QuoteRow() {
  const red = "text-[#f01208]"
  const blue = "text-[#1a5ad0]"
  return (
    <div className="flex h-[21px] pl-[2px] text-[12px] leading-[18px] tracking-[-0.2px]">
      <div className="flex h-[20px] w-[749px] shrink-0 border border-[#8f8f8f] bg-[#f0f0f0]">
        <div className="flex w-[171px] shrink-0 items-center border-r border-[#b5b5b5]">
          <Val w="w-[58px]" color={red}>23,600</Val>
          <svg width={9} height={8} viewBox="0 0 9 8" className="ml-[5px] shrink-0">
            <path d="M4.500 0L9 8H0z" fill="#f01208" />
          </svg>
          <Val w="w-[48px]" color={red}>450</Val>
          <Val w="w-[48px]" color={red}>+1.94%</Val>
        </div>
        <div className="flex w-[172px] shrink-0 items-center border-r border-[#b5b5b5]">
          <Val w="w-[69px]">418,322</Val>
          <Val w="w-[59px]" color={blue}>70.07%</Val>
          <Val w="w-[41px]">3.03%</Val>
        </div>
        <div className="flex w-[82px] shrink-0 items-center border-r border-[#b5b5b5]">
          <Val w="w-[77px]">9,914백만</Val>
        </div>
        <div className="flex w-[140px] shrink-0 items-center border-r border-[#b5b5b5]">
          <Val w="w-[37px]">최우선</Val>
          <Val w="w-[46px]" color={red}>23,650</Val>
          <Val w="w-[50px]" color={red}>23,600</Val>
        </div>
        <div className="flex flex-1 items-center">
          <Val w="w-[11px]">시</Val>
          <Val w="w-[43px]" color={red}>23,900</Val>
          <Val w="w-[18px]">고</Val>
          <Val w="w-[43px]" color={red}>24,350</Val>
          <Val w="w-[18px]">저</Val>
          <Val w="w-[43px]" color={blue}>23,050</Val>
        </div>
      </div>
      <div className="ml-[3px] flex h-[20px] w-[40px] items-center justify-center border border-[#8f8f8f] bg-[#f5d0cb] text-[13px] tracking-normal">매수</div>
      <div className="ml-px flex h-[20px] w-[40px] items-center justify-center border border-[#8f8f8f] bg-[#c5dff0] text-[13px] tracking-normal">매도</div>
    </div>
  )
}

function TitleBar() {
  return (
    <div className="flex h-[18px] items-center bg-[#736db5] text-[#e4e3f3]">
      <div className="ml-[1px] flex h-[14px] w-[11px] items-center justify-center rounded-[2px] border border-[#d8e4f4] bg-[#3a72b8] text-[11px] font-bold leading-none text-white">1</div>
      <span className="ml-[6px] text-[13px] leading-none tracking-[0.5px] whitespace-nowrap">
        [0600] 키움종합차트 - 업종[오락문화] 시가총액[3,251(억)] 신용잔고비율[5.61] 부채비율[169.5]
      </span>
      <div className="ml-auto flex items-center">
        <svg width={12} height={12} viewBox="0 0 12 12" fill="none" stroke="#cfcde8">
          <path d="M.500.500h11v11H.500zM.500 6.500h5.500v5" />
        </svg>
        <svg width={13} height={12} viewBox="0 0 13 12" fill="none" stroke="#cfcde8" className="ml-[8px]">
          <path d="M4.500.500h8v6h-8zM.500 4.500h8v7h-8z" />
        </svg>
        <svg width={11} height={14} viewBox="0 0 11 14" className="ml-[7px]">
          <path d="M2 0h7v2L8 7l3 2H0l3-2-1-5zM5 9h1v5H5z" fill="#cfcde8" />
        </svg>
        <span className="ml-[7px] w-[8px] font-['Liberation_Serif'] text-[13px] font-bold leading-none text-[#cfcde8]">T</span>
        <span className="ml-[9px] w-[8px] text-[13px] font-bold leading-none text-[#cfcde8]">?</span>
        <div className="ml-[10px] h-[12px] w-px bg-[#cfcde8]" />
        <div className="ml-[7px] mt-[1px] h-[2px] w-[10px] bg-[#cfcde8]" />
        <div className="ml-[8px] h-[10px] w-[10px] border border-t-2 border-[#cfcde8]" />
        <svg width={2} height={10} viewBox="0 0 2 10" className="ml-[8px]">
          <path d="M0 0l2 2M0 10l2-2" stroke="#cfcde8" />
        </svg>
      </div>
    </div>
  )
}

function MiniBtn({ ml = "", children }: { ml?: string; children: ReactNode }) {
  return (
    <div className={`flex h-[18px] w-[16px] shrink-0 items-center justify-center border border-[#9a9a9a] bg-[#f2f2f2] ${ml}`}>
      {children}
    </div>
  )
}

function BottomBar() {
  const s = "#666666"
  return (
    <div className="flex h-[20px] items-center border-t border-[#8c8c8c] bg-[#fbfbfb] pl-[2px]">
      <MiniBtn>
        <svg width={5} height={9} viewBox="0 0 5 9"><path d="M5 0v9L0 4.500z" fill="#111111" /></svg>
      </MiniBtn>
      <div className="w-[1180px] shrink-0" />
      <div className="h-[17px] w-[178px] shrink-0 rounded-[2px] border border-[#bbbbbb] bg-[#f0f0f0]" />
      <MiniBtn ml="ml-[2px]">
        <svg width={5} height={9} viewBox="0 0 5 9"><path d="M0 0v9l5-4.500z" fill="#111111" /></svg>
      </MiniBtn>
      <MiniBtn>
        <svg width={11} height={8} viewBox="0 0 11 8"><path d="M5 0v8L0 4zM11 0v8L6 4z" fill="#111111" /></svg>
      </MiniBtn>
      <MiniBtn ml="ml-px">
        <div className="h-[8px] w-[8px] bg-[#111111]" />
      </MiniBtn>
      <MiniBtn ml="ml-px">
        <svg width={11} height={8} viewBox="0 0 11 8"><path d="M0 0v8l5-4zM6 0v8l5-4z" fill="#111111" /></svg>
      </MiniBtn>
      <svg width={75} height={19} viewBox="0 0 75 19" className="ml-[4px] shrink-0">
        <rect x={2} y={4} width={68} height={2} fill="#9a9a9a" />
        <path d="M13 2h3v8l-2 2z" fill="#9a9a9a" stroke="#777777" strokeWidth={0.5} />
        {[2, 10, 18, 26, 34, 42, 50, 58, 66].map((x) => (
          <rect key={x} x={x} y={15} width={1} height={3} fill="#444444" />
        ))}
      </svg>
      <div className="ml-[4px] flex items-center gap-[3px] text-[#555555]">
        <svg width={14} height={14} viewBox="0 0 14 14" fill="none" stroke={s}>
          <path d="M1.500 1.500h10v8h-10zM7 7h6.500v6.500H7zM10 7v6.500M7 10h6.500" />
        </svg>
        <svg width={14} height={14} viewBox="0 0 14 14" fill="none" stroke={s}>
          <circle cx="7" cy="7" r="3" />
          <circle cx="7" cy="7" r="5.500" strokeDasharray="2.500 1.500" strokeWidth="2" />
        </svg>
        <svg width={14} height={14} viewBox="0 0 14 14" fill="none" stroke={s}>
          <path d="M0 7l3-3 3 3 4-4 4 3M0 2l3 2" />
          <circle cx="4" cy="11" r="2" fill="#333333" stroke="#333333" />
        </svg>
        <svg width={14} height={14} viewBox="0 0 14 14" fill="none" stroke={s} strokeDasharray="2 1">
          <path d="M0 1.500h14M0 12.500h14M0 10l5-4 3 2 6-6" />
        </svg>
        <svg width={14} height={14} viewBox="0 0 14 14" fill="none" stroke={s}>
          <path d="M0 9h4l2-5h2l2 5h4M7 4v8" />
        </svg>
        <svg width={14} height={14} viewBox="0 0 14 14" fill="none" stroke={s}>
          <path d="M0 8h3l2-6 2 11 2-7 2 3h3" />
        </svg>
        <svg width={14} height={14} viewBox="0 0 14 14" fill="none" stroke={s}>
          <path d="M0 12L6 3l4 6 4-3M3 12l4-6 3 7" />
        </svg>
        <svg width={14} height={14} viewBox="0 0 14 14" fill="none" stroke={s}>
          <path d="M1 5l4-3h4v6l-4 3H1zM1 5h4v6M5 5l4-3M10 13v-3M12 13V8M14 13V6" />
        </svg>
        <svg width={13} height={14} viewBox="0 0 13 14" fill="none" stroke={s}>
          <circle cx="5.500" cy="5.500" r="4.500" strokeWidth="1.300" />
          <path d="M8.500 9l4 4" strokeWidth="2" />
        </svg>
        <span className="ml-[2px] w-[11px] text-[14px] font-bold leading-none text-[#444444]">A</span>
        <svg width={12} height={14} viewBox="0 0 12 14" fill="none" stroke={s}>
          <path d="M1 8l6-5h4v4l-6 5H1zM1 8h4v4M5 8l6-5" />
        </svg>
        <span className="ml-[-1px] w-[7px] font-['Liberation_Serif'] text-[11px] font-bold leading-none text-[#444444]">T</span>
      </div>
    </div>
  )
}

export default function App() {
  return (
    <div className="flex h-[805px] w-[1721px] flex-col overflow-hidden bg-[#d8d8e6] [font-family:'Liberation_Sans','Noto_Sans_CJK_KR',sans-serif]">
      <TitleBar />
      <TopToolbar />
      <QuoteRow />
      <div className="h-px bg-[#d8d8e6]" />
      <div className="border-t border-[#f8f8f8]">
        <div className="ml-px flex border-l border-t border-[#8c8c8c] bg-[#dcdcdc]">
          <PriceChart />
          <PriceAxis />
        </div>
        <div className="ml-px flex border-l border-t border-[#8c8c8c] bg-[#dcdcdc]">
          <VolumeChart />
          <VolumeAxis />
        </div>
        <div className="ml-px flex h-[18px] border-l border-t border-[#8c8c8c] bg-[#d5e0ee] text-[12px] leading-[17px] tracking-[-0.2px] text-[#555555]">
          {dateCells.map(([label, width], i) => (
            <div
              key={i}
              className="shrink-0 overflow-hidden whitespace-nowrap border-r border-[#8c8c8c] pl-px"
              style={{ width }}
            >
              {label}
            </div>
          ))}
          <div className="pl-[8px] pt-0">04/27</div>
        </div>
      </div>
      <BottomBar />
    </div>
  )
}
